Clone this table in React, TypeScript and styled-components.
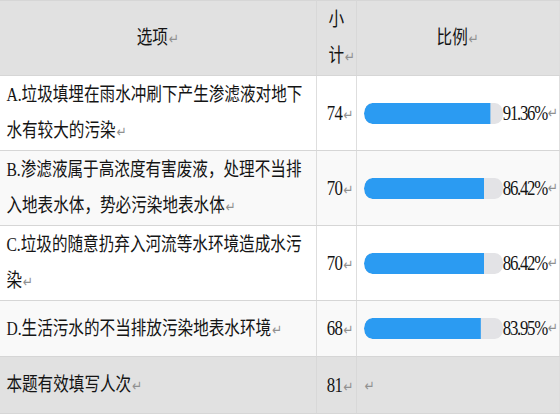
import React from 'react';
import styled, { createGlobalStyle } from 'styled-components';

const GlobalStyle = createGlobalStyle`
  html, body {
    margin: 0;
    padding: 0;
    background: #fff;
  }
  body {
    font-family: "Liberation Serif", "Noto Sans CJK SC", serif;
    color: #141414;
    overflow: hidden;
  }
`;

// The source is a horizontally squeezed document capture: lay out wide, squeeze on x
const Page = styled.div`
  width: 700px;
  transform: scaleX(0.8);
  transform-origin: 0 0;
`;

const Table = styled.table`
  width: 699px;
  table-layout: fixed;
  border-collapse: collapse;
  border-top: 1px solid #ececec;
  font-size: 19.5px;
  line-height: 36px;
`;

const Row = styled.tr<{ $tone?: 'plain' | 'soft' | 'grey' }>`
  background: ${({ $tone }) =>
    $tone === 'grey' ? '#e1e1e1' : $tone === 'soft' ? '#f9f9f9' : '#fff'};
`;

const Cell = styled.td<{ $h: number; $align?: 'left' | 'center' | 'right'; $pad?: string }>`
  height: ${({ $h }) => $h}px;
  padding: ${({ $pad }) => $pad || '0'};
  text-align: ${({ $align }) => $align || 'left'};
  vertical-align: middle;
  border: 1px solid #d6d6d6;

  &:first-child {
    border-left: none;
  }
`;

const Mark = styled.span`
  font-family: "DejaVu Sans", sans-serif;
  font-size: 15px;
  line-height: 1;
  margin-left: 1px;
  color: #909090;
`;

const Num = styled.span`
  font-size: 21px;
  letter-spacing: -0.8px;
`;

const BarWrap = styled.div`
  display: flex;
  align-items: center;
  white-space: nowrap;
`;

const Track = styled.div`
  width: 174px;
  height: 21px;
  border-radius: 11px;
  background: #e3e3e6;
  overflow: hidden;
  flex: none;
`;

const Fill = styled.div`
  height: 100%;
  background: #2b9bf2;
  border-radius: 11px 0 0 11px;
`;

const Pct = styled.span`
  font-size: 21px;
  letter-spacing: -1.6px;
  line-height: 21px;
`;

const rows = [
  { label: 'A.垃圾填埋在雨水冲刷下产生渗滤液对地下水有较大的污染', n: 74, pct: '91.36', h: 74 },
  { label: 'B.渗滤液属于高浓度有害废液，处理不当排入地表水体，势必污染地表水体', n: 70, pct: '86.42', h: 74 },
  { label: 'C.垃圾的随意扔弃入河流等水环境造成水污染', n: 70, pct: '86.42', h: 74 },
  { label: 'D.生活污水的不当排放污染地表水环境', n: 68, pct: '83.95', h: 55 },
];

const Ret = () => <Mark>↵</Mark>;

export default function App() {
  return (
    <Page>
      <GlobalStyle />
      <Table>
        <colgroup>
          <col style={{ width: 395 }} />
          <col style={{ width: 50 }} />
          <col style={{ width: 254 }} />
        </colgroup>
        <tbody>
          <Row $tone="grey">
            <Cell $h={74} $align="center">
              选项<Ret />
            </Cell>
            <Cell $h={74} $pad="0 0 0 15px">
              小<br />
              计<Ret />
            </Cell>
            <Cell $h={74} $align="center">
              比例<Ret />
            </Cell>
          </Row>
          {rows.map((r, i) => (
            <Row key={r.label} $tone={i % 2 ? 'soft' : 'plain'}>
              <Cell $h={r.h} $pad="0 8px 0 8px">
                {r.label}
                <Ret />
              </Cell>
              <Cell $h={r.h} $align="right" $pad="0 3px 0 0">
                <Num>{r.n}</Num>
                <Ret />
              </Cell>
              <Cell $h={r.h} $pad="0 0 0 9px">
                <BarWrap>
                  <Track>
                    <Fill style={{ width: `${r.pct}%` }} />
                  </Track>
                  <Pct>{r.pct}%</Pct>
                  <Ret />
                </BarWrap>
              </Cell>
            </Row>
          ))}
          <Row $tone="grey">
            <Cell $h={56} $pad="0 0 0 8px">
              本题有效填写人次<Ret />
            </Cell>
            <Cell $h={56} $align="right" $pad="0 3px 0 0">
              <Num>81</Num>
              <Ret />
            </Cell>
            <Cell $h={56} $pad="0 0 0 9px">
              <Ret />
            </Cell>
          </Row>
        </tbody>
      </Table>
    </Page>
  );
}
